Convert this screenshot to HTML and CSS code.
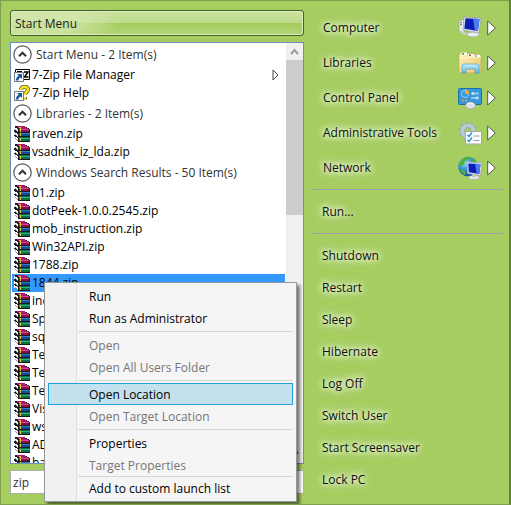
FILE: index.html
```html
<!DOCTYPE html>
<html lang="en">
<head>
<meta charset="utf-8">
<title>Start Menu</title>
<link rel="stylesheet" href="styles.css">
</head>
<body>
<svg class="sprites" aria-hidden="true">
  <symbol id="rar" viewBox="0 0 16 16">
    <g shape-rendering="crispEdges">
      <path d="M0 1l1-1h9l6 3v12l-1 1H5l-5-4V8l1-1-1-1z" fill="#1a1a1a"/>
      <path d="M0 1l4 2v3L1 4H0zM0 6l4 2v3L1 9H0zM0 10l4 2v3l-3-2H0z" fill="#fff"/>
      <path d="M1 3l3 2v1L1 4zM1 8l3 2v1L1 9zM1 12l3 2v1l-3-2z" fill="#999"/>
      <path d="M2 0h8l5 3H6z" fill="#b0186f"/>
      <path d="M5 3h10v3H5z" fill="#8c0e4c"/>
      <path d="M5 3h10v1H5z" fill="#cf4a90"/>
      <path d="M5 7h11v3H5z" fill="#0f4a9c"/>
      <path d="M5 7h11v1H5z" fill="#2f80cc"/>
      <path d="M5 11h11v4H5z" fill="#077048"/>
      <path d="M5 12h11v1H5z" fill="#30b080"/>
      <path d="M5 1h2v1H5zM6 2h1v4H6zM6 7h1v3H6zM6 12h1v3H6z" fill="#e0c838"/>
    </g>
  </symbol>
  <symbol id="shortcut" viewBox="0 0 10 10">
    <path d="M.5.5h9v9h-9z" fill="#fff" stroke="#777"/>
    <path d="M3 2h5v5L6.500 5.500C5 6 4.500 7 4.500 8.500H2C2 6 3 4.500 4.800 3.800z" fill="#1456a8"/>
  </symbol>
  <symbol id="chevron" viewBox="0 0 19 19">
    <circle cx="9.500" cy="9.500" r="8.700" fill="#fff" stroke="#555" stroke-width="1.200"/>
    <path d="M6 11.200l3.500-3.500 3.500 3.500" fill="none" stroke="#333" stroke-width="2"/>
  </symbol>
  <symbol id="arrow" viewBox="0 0 9 16">
    <path d="M.7 1v14l7.600-7z" fill="#fff" stroke="#555" stroke-width="1"/>
  </symbol>
  <linearGradient id="folder" x1="0" y1="0" x2="1" y2="1">
    <stop offset="0" stop-color="#fff3bd"/><stop offset="1" stop-color="#e9c766"/>
  </linearGradient>
  <linearGradient id="glass" x1="0" y1="0" x2="0" y2="1">
    <stop offset="0" stop-color="#cdeefa"/><stop offset="1" stop-color="#5db4dc"/>
  </linearGradient>
  <radialGradient id="globe" cx=".35" cy=".3" r=".8">
    <stop offset="0" stop-color="#9fe0ff"/><stop offset=".5" stop-color="#2a86d8"/><stop offset="1" stop-color="#0c3c92"/>
  </radialGradient>
</svg>

<main class="start">
  <section class="left">
    <button class="title" type="button">Start Menu</button>
    <div class="list">
      <div class="results">
        <h2><svg><use href="#chevron"/></svg>Start Menu - 2 Item(s)</h2>
        <ul>
          <li>
            <svg viewBox="0 0 16 16"><path d="M1.500 2.500h14v10h-14z" fill="#fff" stroke="#000"/><path d="M10 5h4l-3.500 5h4" fill="none" stroke="#000" stroke-width="1.500"/><path d="M3 4.500h5" stroke="#000"/><use href="#shortcut" x="0" y="5" width="10" height="10"/></svg>
            7-Zip File Manager
            <svg class="more" viewBox="0 0 7 12"><path d="M1 1v10l5-5z" fill="#fff" stroke="#444"/></svg>
          </li>
          <li>
            <svg viewBox="0 0 16 16"><path d="M7 4.500C7 1 14 1 14 4.500 14 7 11 7 11 10M11 12v2.500" fill="none" stroke="#555" stroke-width="4"/><path d="M7 4.500C7 1 14 1 14 4.500 14 7 11 7 11 10M11 12v2.500" fill="none" stroke="#fae414" stroke-width="2.600"/><use href="#shortcut" x="0" y="6" width="10" height="10"/></svg>
            7-Zip Help
          </li>
        </ul>
        <h2><svg><use href="#chevron"/></svg>Libraries - 2 Item(s)</h2>
        <ul>
          <li><svg><use href="#rar"/></svg>raven.zip</li>
          <li><svg><use href="#rar"/></svg>vsadnik_iz_lda.zip</li>
        </ul>
        <h2><svg><use href="#chevron"/></svg>Windows Search Results - 50 Item(s)</h2>
        <ul>
          <li><svg><use href="#rar"/></svg>01.zip</li>
          <li><svg><use href="#rar"/></svg>dotPeek-1.0.0.2545.zip</li>
          <li><svg><use href="#rar"/></svg>mob_instruction.zip</li>
          <li><svg><use href="#rar"/></svg>Win32API.zip</li>
          <li><svg><use href="#rar"/></svg>1788.zip</li>
          <li class="selected"><svg><use href="#rar"/></svg>1844.zip</li>
          <li><svg><use href="#rar"/></svg>inc</li>
          <li><svg><use href="#rar"/></svg>Sp</li>
          <li><svg><use href="#rar"/></svg>sq</li>
          <li><svg><use href="#rar"/></svg>Te</li>
          <li><svg><use href="#rar"/></svg>Te</li>
          <li><svg><use href="#rar"/></svg>Te</li>
          <li><svg><use href="#rar"/></svg>Vis</li>
          <li><svg><use href="#rar"/></svg>ws</li>
          <li><svg><use href="#rar"/></svg>AD</li>
          <li><svg><use href="#rar"/></svg>ba</li>
        </ul>
      </div>
      <div class="scrollbar">
        <svg viewBox="0 0 17 17"><path d="M5 11l3.500-4 3.500 4" fill="none" stroke="#999" stroke-width="2"/></svg>
        <div class="thumb"></div>
        <svg class="down" viewBox="0 0 17 17"><path d="M5 6l3.500 4 3.500-4" fill="none" stroke="#555" stroke-width="2"/></svg>
      </div>
    </div>
    <input class="search" type="text" value="zip" aria-label="Search">
  </section>

  <nav class="right">
    <div class="places">
      <a href="#"><span>Computer</span>
        <svg class="pic" viewBox="0 0 24 24"><path d="M1 5l5-2v14l-5-2z" fill="#e8eaee" stroke="#8b93a0" stroke-width=".6"/><path d="M2 7l2-1M2 9l2-1" stroke="#667"/><path d="M6 1l17 1-2 15-16-3z" fill="#dfe3ea" stroke="#8f96a3" stroke-width=".6"/><path d="M7.500 2.200l14 .8-1.600 12-13.600-2.300z" fill="#0b1fb8"/><path d="M15 2.600l6.500.4-1.600 12-3-.5z" fill="#4f7cec"/><path d="M12 15l5 1 1 3h-6z" fill="#b9bec7"/><ellipse cx="15" cy="18.500" rx="6" ry="2.300" fill="#eceef2" stroke="#9aa0aa" stroke-width=".5"/><path d="M1 15l6 1 2 2-3 1z" fill="#ccd1d9"/></svg>
        <svg class="arrow"><use href="#arrow"/></svg></a>
      <a href="#"><span>Libraries</span>
        <svg class="pic" viewBox="0 0 24 24"><path d="M1 3l2-1h6l1 2h3l1-1h8l1 2v16l-2 1H2l-1-1z" fill="url(#folder)" stroke="#c4a75a" stroke-width=".7"/><path d="M3 1.500h6v2H3zM10 3h5v2h-5zM16 4h6v2h-6z" fill="#fff"/><path d="M4 2h2v1.500H4z" fill="#2a9a3c"/><path d="M11 3.500h2V5h-2z" fill="#d6402a"/><path d="M17 4.500h2V6h-2z" fill="#2b7fd0"/><path d="M1 7h9l2-1h11" fill="none" stroke="#fffbe0"/><path d="M4 22v-7q0-2 2-2h13q2 0 2 2v7h-4v-4H8v4z" fill="url(#glass)" stroke="#4a9cc4" stroke-width=".7"/></svg>
        <svg class="arrow"><use href="#arrow"/></svg></a>
      <a href="#"><span>Control Panel</span>
        <svg class="pic" viewBox="0 0 24 24"><rect x=".5" y="2.500" width="23" height="16" rx="1" fill="#3598dc" stroke="#1b6dac"/><circle cx="7" cy="8" r="3.500" fill="none" stroke="#9fd0f4"/><path d="M7 8V3a5 5 0 0 1 4 5z" fill="#ffa62b"/><path d="M13 7.500h8M13 12h8" stroke="#8fcaf4" stroke-width="2"/><path d="M15 6v3M19 10.500v3" stroke="#fff"/><path d="M4 14.500h2m1 0h2" stroke="#ff9a2a" stroke-width="1.500"/><ellipse cx="12.500" cy="19.500" rx="5" ry="3.500" fill="#dde0e4" stroke="#8b939d" stroke-width=".6"/><path d="M9.500 18q3-2 5.500 0" stroke="#fff" fill="none"/></svg>
        <svg class="arrow"><use href="#arrow"/></svg></a>
      <a href="#"><span>Administrative Tools</span>
        <svg class="pic" viewBox="0 0 24 24"><circle cx="10" cy="10" r="8" fill="none" stroke="#98acbc" stroke-width="3" stroke-dasharray="2.500 2.500"/><circle cx="10" cy="10" r="5.500" fill="none" stroke="#b7cad8" stroke-width="4"/><circle cx="10" cy="10" r="3.500" fill="#a6cd60" stroke="#8ea0af" stroke-width=".6"/><path d="M7.500 10.500h16v12.500h-16z" fill="#fbfcfd" stroke="#a4a9b0"/><path d="M9.500 14l1.500 1.500 3-4M9.500 19l1.500 1.500 3-4" fill="none" stroke="#1c8fc8" stroke-width="1.300"/><path d="M15.500 15h6M15.500 19.500h6" stroke="#999fa8" stroke-width="1.200"/></svg>
        <svg class="arrow"><use href="#arrow"/></svg></a>
      <a href="#"><span>Network</span>
        <svg class="pic" viewBox="0 0 24 24"><circle cx="10" cy="10.500" r="9.800" fill="url(#globe)"/><path d="M2 6q4-6 10-5l-2 3-3 1-1 4-4 1zM2 13l4 1 2 3-1 2q-4-2-5-6zM13 2q4 1 6 5l-5-1z" fill="#4cb335"/><path d="M9 6l15 .5-1.500 13-13-2z" fill="#e2e6ec" stroke="#8f96a3" stroke-width=".6"/><path d="M10.300 7.400l12.200.5-1.200 10-10.500-1.600z" fill="#0b1fb8"/><path d="M17 7.700l5.500.2-1.200 10-2.500-.4z" fill="#4f7cec"/><ellipse cx="16" cy="21.500" rx="5.500" ry="2" fill="#e6e9ee" stroke="#9aa0aa" stroke-width=".5"/><path d="M14 18.500h4v3h-4z" fill="#c6cad1"/></svg>
        <svg class="arrow"><use href="#arrow"/></svg></a>
    </div>
    <div class="run"><a href="#"><span>Run...</span></a></div>
    <div class="power">
      <button type="button"><span>Shutdown</span></button>
      <button type="button"><span>Restart</span></button>
      <button type="button"><span>Sleep</span></button>
      <button type="button"><span>Hibernate</span></button>
      <button type="button"><span>Log Off</span></button>
      <button type="button"><span>Switch User</span></button>
      <button type="button"><span>Start Screensaver</span></button>
      <button type="button"><span>Lock PC</span></button>
    </div>
  </nav>

  <div class="menu" role="menu">
    <button type="button" role="menuitem">Run</button>
    <button type="button" role="menuitem">Run as Administrator</button>
    <hr>
    <button type="button" role="menuitem" disabled>Open</button>
    <button type="button" role="menuitem" disabled>Open All Users Folder</button>
    <hr>
    <button type="button" role="menuitem" class="active">Open Location</button>
    <button type="button" role="menuitem" disabled>Open Target Location</button>
    <hr>
    <button type="button" role="menuitem">Properties</button>
    <button type="button" role="menuitem" disabled>Target Properties</button>
    <hr class="tight">
    <button type="button" role="menuitem">Add to custom launch list</button>
  </div>
</main>
</body>
</html>
```
FILE: styles.css
```css
* { box-sizing: border-box; }

body {
  margin: 0;
  font: 12px/18px "Open Sans", "Noto Sans", sans-serif;
  color: #000;
}

button, input { font: inherit; color: inherit; }

.sprites { position: absolute; width: 0; height: 0; }

.start {
  position: relative;
  display: flex;
  gap: 8px;
  height: 100vh;
  padding: 9px 6px 10px 9px;
  background: #a6cd60;
  border: 1px solid #7f9f4b;
  border-right: 2px solid #64803a;
  overflow: hidden;
}

.left {
  flex: 294 1 0;
  min-width: 0;
  display: flex;
  flex-direction: column;
  gap: 6px;
}

.title {
  height: 26px;
  padding: 2px 4px 0;
  text-align: left;
  border: 1px solid #46602a;
  border-radius: 3px;
  background:
    radial-gradient(ellipse 80px 20px at 30px 50%, rgba(214, 233, 178, .7) 50%, transparent),
    linear-gradient(#cbe2a0, #bddb8b 50%, #a3cb5a 50%, #b4d67a);
  box-shadow: inset 0 0 0 1px #dcedbc;
  color: #222;
}

.list {
  flex: 1;
  min-height: 0;
  display: flex;
  background: #fff;
  border: 1px solid #6c8fb5;
}

.results {
  flex: 1;
  min-width: 0;
  overflow: hidden;
  padding: 0 1px;
}

.results h2 {
  display: flex;
  align-items: center;
  gap: 4px;
  height: 23px;
  margin: 0;
  padding-left: 1px;
  font-size: 12px;
  font-weight: 400;
  color: #333;
}

.results h2 svg { width: 19px; height: 19px; }

.results ul { margin: 0; padding: 0; list-style: none; }

.results li {
  display: flex;
  align-items: center;
  gap: 2px;
  height: 18px;
  padding-left: 2px;
}

.results li svg { width: 16px; height: 16px; }

.results li .more { width: 7px; height: 12px; margin: 0 6px 0 auto; }

.results .selected { background: #3399ff; }

.scrollbar {
  display: flex;
  flex-direction: column;
  width: 17px;
  background: #f0f0f0;
}

.scrollbar svg { width: 17px; height: 17px; }

.thumb { height: 37%; background: #cdcdcd; }

.down { margin-top: auto; }

.search {
  width: 100%;
  height: 24px;
  padding: 0 2px;
  border: 1px solid #abadb3;
  background: #fff;
  color: #333;
}

.right { flex: 191 1 0; min-width: 0; }

.right a, .power button {
  display: flex;
  align-items: center;
  width: 100%;
  padding: 0 7px 0 10px;
  border: 0;
  background: none;
  color: #111;
  text-decoration: none;
  text-align: left;
}

.right span {
  flex: 1;
  text-shadow: 0 0 4px #e6f3cf, 0 0 6px #e6f3cf, 0 0 8px #e6f3cf, 0 0 12px #e6f3cf;
}

.places { padding-bottom: 4px; }

.places a { height: 35px; padding-left: 11px; }

.pic { width: 24px; height: 24px; margin-right: 5px; }

.arrow { width: 9px; height: 16px; }

.run {
  padding: 6px 0;
  border: solid #a09ca9;
  border-width: 1px 0;
}

.run a { height: 31px; }

.power { padding-top: 6px; }

.power button { height: 32px; }

.menu {
  position: absolute;
  left: 43px;
  top: 281px;
  width: 253px;
  padding: 2px 3px;
  border: 1px solid #979797;
  background: linear-gradient(90deg, #f1f1f1 31px, #dedede 31px, #dedede 32px, #f5f5f5 32px);
  box-shadow: 3px 3px 3px rgba(0, 0, 0, .5);
}

.menu button {
  display: block;
  width: 100%;
  height: 22px;
  padding: 1px 0 0 40px;
  border: 1px solid transparent;
  background: none;
  line-height: 19px;
  text-align: left;
}

.menu button:disabled { color: #777; }

.menu .active { background: #c4e1ef; border-color: #26a0da; }

.menu hr {
  height: 1px;
  margin: 2px 0 2px 30px;
  border: 0;
  background: #d7d7d7;
}

.menu .tight { margin-top: 0; margin-bottom: 0; }
```
